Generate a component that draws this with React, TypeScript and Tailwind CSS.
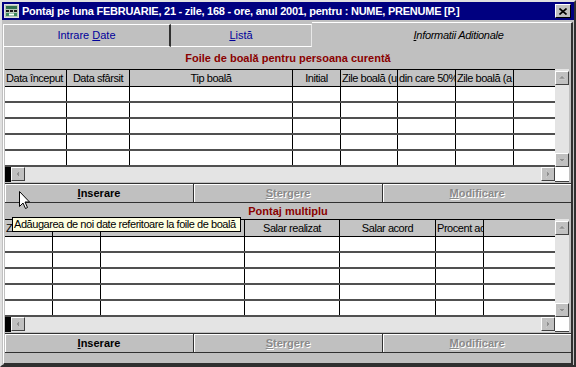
import React from "react";

const FONT = "font-['Liberation_Sans',Arial,sans-serif]";

function ArrowBtn({ dir }: { dir: "up" | "down" | "left" | "right" }) {
  const pts: Record<string, string> = {
    up: "3.5,8 7,4.5 10.5,8",
    down: "3.5,5.5 7,9 10.5,5.5",
    left: "8.5,3.5 5,7 8.5,10.5",
    right: "5.5,3.5 9,7 5.5,10.5",
  };
  return (
    <div className="w-[14px] h-[14px] shrink-0 bg-[#c0c0c0] border border-t-white border-l-white border-r-[#404040] border-b-[#404040] flex items-center justify-center">
      <svg width="12" height="12" viewBox="1 1 12 12">
        <polygon points={pts[dir]} fill="#909090" stroke="#ffffff" strokeWidth="0.3" />
      </svg>
    </div>
  );
}

function VScroll() {
  return (
    <div className="w-[14px] shrink-0 flex flex-col bg-[#e4e4e4] pt-[2px]">
      <ArrowBtn dir="up" />
      <div className="flex-1" />
      <ArrowBtn dir="down" />
    </div>
  );
}

function HScroll() {
  return (
    <div className="flex h-[15px]">
      <div className="w-[550px] flex bg-[#e4e4e4]">
        <div className="w-[6px] bg-black" />
        <ArrowBtn dir="left" />
        <div className="flex-1" />
        <ArrowBtn dir="right" />
      </div>
      <div className="w-[14px] bg-white border-b border-[#404040]" />
    </div>
  );
}

function Cells({ n, cls }: { n: number; cls: string }) {
  return (
    <>
      {Array.from({ length: n }).map((_, i) => (
        <div key={i} className={cls} />
      ))}
    </>
  );
}

function Grid1() {
  const cols = "grid grid-cols-[62px_63px_163px_48px_57px_58px_58px_1fr]";
  const hc = "border-r border-black overflow-hidden whitespace-nowrap leading-[17px] px-[1px]";
  return (
    <div className="flex flex-col">
      <div className="flex h-[98px]">
        <div className="w-[550px] flex flex-col bg-white border-t border-black">
          <div className={`${cols} h-[17px] bg-[#c4c4c4] border-b border-black text-[11px] tracking-[-0.45px] text-black`}>
            <div className={hc}>Data început</div>
            <div className={`${hc} text-center`}>Data sfârsit</div>
            <div className={`${hc} text-center`}>Tip boală</div>
            <div className={`${hc} text-center`}>Initial</div>
            <div className={hc}>Zile boală (u</div>
            <div className={hc}>din care 50%</div>
            <div className={hc}>Zile boală (a</div>
            <div />
          </div>
          {Array.from({ length: 5 }).map((_, r) => (
            <div key={r} className={`${cols} h-[16px] border-b-2 border-[#505050]`}>
              <Cells n={7} cls="border-r border-black" />
              <div />
            </div>
          ))}
        </div>
        <VScroll />
      </div>
      <HScroll />
    </div>
  );
}

function Grid2() {
  const cols = "grid grid-cols-[48px_48px_144px_95px_96px_48px_1fr]";
  const hc = "border-r border-black overflow-hidden whitespace-nowrap leading-[16px] px-[1px]";
  return (
    <div className="flex flex-col">
      <div className="flex h-[98px]">
        <div className="w-[550px] flex flex-col bg-white border-t border-black">
          <div className={`${cols} h-[17px] bg-[#c4c4c4] border-b border-black text-[11px] tracking-[-0.45px] text-black`}>
            <div className={hc}>Z</div>
            <div className={hc}></div>
            <div className={hc}></div>
            <div className={`${hc} text-center`}>Salar realizat</div>
            <div className={`${hc} text-center`}>Salar acord</div>
            <div className={hc}>Procent ac</div>
            <div />
          </div>
          {Array.from({ length: 5 }).map((_, r) => (
            <div key={r} className={`${cols} h-[16px] border-b-2 border-[#505050]`}>
              <Cells n={6} cls="border-r border-black" />
              <div />
            </div>
          ))}
        </div>
        <VScroll />
      </div>
      <HScroll />
    </div>
  );
}

function Buttons() {
  const base =
    "flex-1 h-full flex items-center justify-center text-[11px] font-bold shadow-[inset_1px_1px_0_#ffffff]";
  const dis = "text-[#8a8a8a] [text-shadow:1px_1px_0_#ffffff]";
  return (
    <div className="flex h-[20px] border-y border-[#303030] bg-[#c0c0c0]">
      <div className={`${base} border-r border-[#303030] text-black`}>
        <span><span className="underline">I</span>nserare</span>
      </div>
      <div className={`${base} border-r border-[#303030] ${dis}`}>
        <span><span className="underline">S</span>tergere</span>
      </div>
      <div className={`${base} ${dis}`}>
        <span><span className="underline">M</span>odificare</span>
      </div>
    </div>
  );
}

export default function App() {
  return (
    <div className={`${FONT} relative w-[576px] h-[367px] bg-[#c0c0c0] border-2 border-t-[#e0e0e0] border-l-[#e0e0e0] border-r-[#303030] border-b-[#303030] flex flex-col overflow-hidden`}>
      {/* Title bar */}
      <div className="h-[18px] bg-[#000080] flex items-center pl-[2px] pr-[2px] shrink-0">
        <svg width="15" height="14" viewBox="0 0 15 14" className="shrink-0">
          <rect x="0.5" y="0.5" width="14" height="13" fill="#b8c8b8" stroke="#e0e0e0" />
          <rect x="2" y="2" width="11" height="3" fill="#2f6f4f" />
          <rect x="2" y="6" width="3" height="2" fill="#1a1a1a" />
          <rect x="6" y="6" width="3" height="2" fill="#1a1a1a" />
          <rect x="10" y="6" width="3" height="2" fill="#1a1a1a" />
          <rect x="2" y="9" width="11" height="3" fill="#3d8a5e" />
          <rect x="5" y="9.5" width="5" height="2" fill="#ffffff" />
        </svg>
        <span className="ml-[3px] text-white text-[11px] font-bold whitespace-nowrap tracking-[-0.25px]">
          Pontaj pe luna FEBRUARIE, 21 - zile, 168 - ore, anul 2001, pentru : NUME, PRENUME [P.]
        </span>
        <div className="flex-1" />
        <div className="w-[16px] h-[14px] bg-[#c0c0c0] border border-t-white border-l-white border-r-black border-b-black flex items-center justify-center mr-[1px]">
          <svg width="8" height="7" viewBox="0 0 8 7">
            <path d="M0.5 0.5 L7.5 6.5 M7.5 0.5 L0.5 6.5" stroke="black" strokeWidth="1.6" />
          </svg>
        </div>
      </div>

      {/* Tabs */}
      <div className="flex h-[25px] mt-[2px] px-[1px] shrink-0 items-end">
        <div className="w-[168px] h-[23px] border-t border-l border-white border-r-2 border-r-[#303030] border-b border-b-white flex items-center justify-center text-[11px] text-[#00009a]">
          <span>Intrare <span className="underline">D</span>ate</span>
        </div>
        <div className="w-[141px] h-[23px] border-t border-white border-r border-r-[#e8e8e8] border-b border-b-white flex items-center justify-center text-[11px] text-[#00009a]">
          <span><span className="underline">L</span>istă</span>
        </div>
        <div className="flex-1 h-[25px] border-t border-white border-r-2 border-r-[#303030] flex items-center justify-center pl-[34px] text-[11px] italic text-black tracking-[-0.3px]">
          <span><span className="underline">I</span>nformatii Aditionale</span>
        </div>
      </div>

      {/* Tab page */}
      <div className="flex-1 mx-[1px] border-l border-white border-r-2 border-r-[#303030] border-b-2 border-b-[#303030] flex flex-col pl-[1px] pr-0">
        <div className="h-[22px] flex items-center justify-center text-[11px] font-bold text-[#8a0000] shrink-0">
          Foile de boală pentru persoana curentă
        </div>
        <Grid1 />
        <div className="h-[1px]" />
        <Buttons />
        <div className="h-[16px] flex items-center justify-center text-[11px] font-bold text-[#8a0000] shrink-0">
          Pontaj multiplu
        </div>
        <Grid2 />
        <div className="h-[1px]" />
        <Buttons />
        <div className="flex-1" />
      </div>

      {/* Tooltip */}
      <div className="absolute left-[10px] top-[215px] w-[229px] h-[15px] bg-[#ffffe1] border border-black text-[11px] tracking-[-0.45px] text-black leading-[13px] px-[1px] whitespace-nowrap overflow-hidden">
        Adăugarea de noi date referitoare la foile de boală
      </div>

      {/* Cursor */}
      <svg className="absolute left-[17px] top-[189px]" width="12" height="19" viewBox="0 0 12 19">
        <path d="M0.5 0.5 L0.5 15.5 L4 12 L6.5 17.5 L8.5 16.5 L6 11 L10.5 11 Z" fill="white" stroke="black" strokeWidth="1" />
      </svg>
    </div>
  );
}
